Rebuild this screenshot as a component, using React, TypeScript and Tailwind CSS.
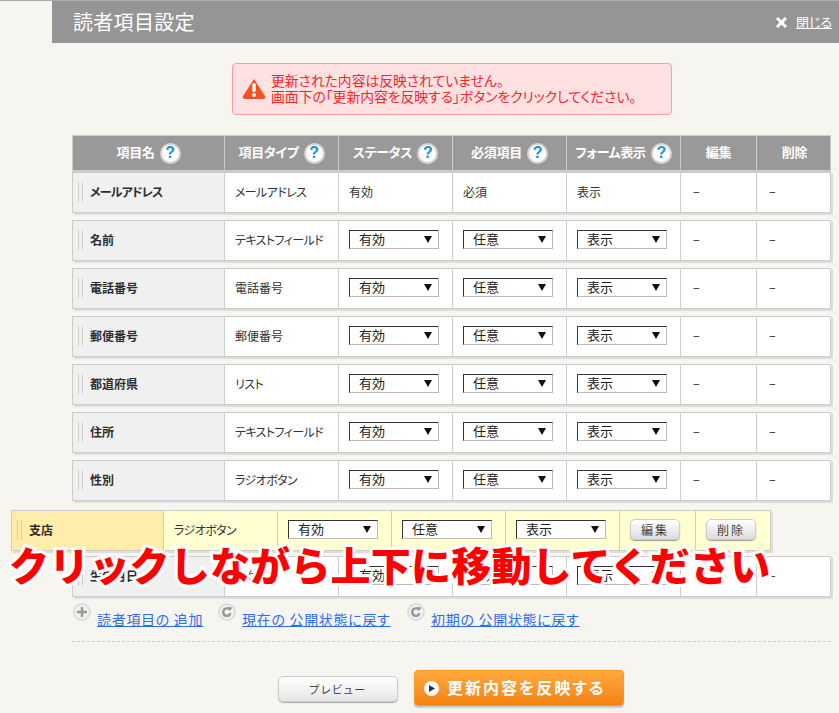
const jp = "font-['Noto_Sans_CJK_JP','Noto_Sans',sans-serif] [font-feature-settings:'palt']";

const cols = "grid grid-cols-[152px_114px_114px_114px_114px_76px_75px]";

const rows = [
  { name: "名前", type: "テキストフィールド", req: "任意" },
  { name: "電話番号", type: "電話番号", req: "任意" },
  { name: "郵便番号", type: "郵便番号", req: "任意" },
  { name: "都道府県", type: "リスト", req: "任意" },
  { name: "住所", type: "テキストフィールド", req: "任意" },
  { name: "性別", type: "ラジオボタン", req: "任意" },
];

// katakana sets tighter than kanji in the reference
const isKana = (s: string) => /^[ァ-ヶー]+$/.test(s);

const HelpIcon = () => (
  <span className="ml-[5px] flex h-[21px] w-[21px] items-center justify-center rounded-full border-2 border-[#d4d4d4] bg-white text-[16px] leading-none font-bold text-[#1b8fd6] font-['Liberation_Sans',sans-serif]">
    ?
  </span>
);

const HeadCell = ({ label, help }: { label: string; help?: boolean }) => (
  <div className="flex items-center justify-center border-r border-[#ccc] last:border-r-0 text-[13px] font-bold tracking-[-0.3px] text-white">
    <span className="-mt-[2px]">{label}</span>
    {help && <HelpIcon />}
  </div>
);

const FakeSelect = ({ value }: { value: string }) => (
  <div className="flex h-[19px] w-[90px] items-center justify-between border border-t-[#333] border-l-[#333] border-r-[#bbb] border-b-[#bbb] bg-white pl-[9px] pr-[6px] text-[13px] text-[#222]">
    <span className="-mt-[1px]">{value}</span>
    <svg width="8" height="7" viewBox="0 0 8 7"><path d="M0 0h8L4 7z" fill="#111" /></svg>
  </div>
);

const Grip = () => (
  <span className="mr-[7px] h-[20px] w-[5px] shrink-0 border-x border-[#ccc]" />
);

const Row = ({ name, type, status, req, show }: { name: string; type: string; status: React.ReactNode; req: React.ReactNode; show: React.ReactNode }) => (
  <div className={`${cols} mb-[7px] h-[41px] border border-[#ccc] bg-white text-[12px] text-[#333] shadow-[2px_2px_0_#dedede]`}>
    <div className="flex items-center border-r border-[#ccc] bg-[#f0f0f0] pb-[2px] pl-[5px] font-bold text-[#2d2d2d]">
      <Grip />
      <span className={isKana(name) ? "tracking-[-0.8px]" : ""}>{name}</span>
    </div>
    <div className="flex items-center border-r border-[#ccc] pb-[2px] pl-[10px]">
      <span className={isKana(type) ? "tracking-[-0.6px]" : ""}>{type}</span>
    </div>
    <div className="flex items-center border-r border-[#ccc] pb-[2px] pl-[10px]">{status}</div>
    <div className="flex items-center border-r border-[#ccc] pb-[2px] pl-[10px]">{req}</div>
    <div className="flex items-center border-r border-[#ccc] pb-[2px] pl-[10px]">{show}</div>
    <div className="flex items-center border-r border-[#ccc] pb-[2px] pl-[12px]">−</div>
    <div className="flex items-center pb-[2px] pl-[12px]">−</div>
  </div>
);

const GrayButton = ({ label }: { label: string }) => (
  <div className="flex h-[21px] w-[50px] items-center justify-center rounded-[5px] border border-[#ccc] bg-gradient-to-b from-white to-[#dcdcdc] text-[12px] tracking-[2px] text-[#444] shadow-[0_1px_1px_#999]">
    {label}
  </div>
);

const LinkIcon = ({ plus }: { plus?: boolean }) => (
  <span className="flex h-[18px] w-[18px] shrink-0 items-center justify-center rounded-full border-2 border-[#ddd] bg-[#f2f2f2]">
    <svg width="10" height="10" viewBox="0 0 10 10" fill="none" stroke="#999" strokeWidth="2.4">
      {plus ? <path d="M5 0v10M0 5h10" /> : <path d="M8.5 6.2A3.7 3.7 0 1 1 5 1.4h3M6.5 0l2 1.4-2 1.6" />}
    </svg>
  </span>
);

const BottomLink = ({ label, plus, className }: { label: string; plus?: boolean; className: string }) => (
  <div className={`flex items-start ${className}`}>
    <LinkIcon plus={plus} />
    <a className="mt-[6px] ml-[6px] text-[14px] leading-[20px] tracking-[0.7px] text-[#2f6bf0] underline">{label}</a>
  </div>
);

export default function App() {
  return (
    <div className={`relative h-[713px] w-[839px] overflow-hidden border-t border-[#aaa] bg-[#f6f5f0] ${jp}`}>
      <div className="ml-[52px] flex h-[42px] items-center justify-between bg-[#959595] pl-[21px] pr-[7px] text-white">
        <span className="text-[20px] tracking-[0.3px]">読者項目設定</span>
        <div className="flex items-center gap-[9px]">
          <svg width="11" height="11" viewBox="0 0 11 11" stroke="#fff" strokeWidth="3"><path d="M1 1l9 9M10 1l-9 9" /></svg>
          <span className="text-[13px] underline">閉じる</span>
        </div>
      </div>

      <div className="ml-[232px] mt-[20px] flex h-[52px] w-[440px] items-center rounded-[4px] border border-[#ff9a9a] bg-[#ffe1e1] pl-[9px] text-[13.8px] leading-[16px] text-[#f5252d]">
        <svg width="24" height="22" viewBox="0 0 24 22" className="mr-[5px] shrink-0">
          <path d="M12 1L23 18q1 3-2 3H3q-3 0-2-3z" fill="#f4511e" />
          <rect x="10.3" y="5" width="3.4" height="9" rx="1.5" fill="#fff" />
          <circle cx="12" cy="17" r="2" fill="#fff" />
        </svg>
        <div className="-mt-[3px]">
          <div>更新された内容は反映されていません。</div>
          <div>画面下の「更新内容を反映する」ボタンをクリックしてください。</div>
        </div>
      </div>

      <div className="ml-[72px] mt-[20px] w-[759px]">
        <div className={`${cols} h-[37px] border border-b-2 border-[#ccc] bg-[#999]`}>
          <HeadCell label="項目名" help />
          <HeadCell label="項目タイプ" help />
          <HeadCell label="ステータス" help />
          <HeadCell label="必須項目" help />
          <HeadCell label="フォーム表示" help />
          <HeadCell label="編集" />
          <HeadCell label="削除" />
        </div>
        <Row name="メールアドレス" type="メールアドレス" status="有効" req="必須" show="表示" />
        {rows.map((r) => (
          <Row
            key={r.name}
            name={r.name}
            type={r.type}
            status={<FakeSelect value="有効" />}
            req={<FakeSelect value={r.req} />}
            show={<FakeSelect value="表示" />}
          />
        ))}
        <div className="h-[48px]" />
        <Row name="生年月日" type="日付" status={<FakeSelect value="有効" />} req={<FakeSelect value="任意" />} show={<FakeSelect value="表示" />} />

        <div className="-mt-[1px] flex">
          <BottomLink label="読者項目の 追加" plus className="ml-[1px] w-[145px]" />
          <BottomLink label="現在の 公開状態に戻す" className="w-[189px]" />
          <BottomLink label="初期の 公開状態に戻す" className="" />
        </div>
        <div className="mt-[12px] border-t border-dashed border-[#ccc]" />

        <div className="mt-[28px] flex items-center">
          <div className="ml-[206px] flex h-[26px] w-[120px] items-center justify-center rounded-[5px] border border-[#ccc] bg-gradient-to-b from-white to-[#e6e6e6] text-[11px] tracking-[1.5px] text-[#444] shadow-[0_1px_1px_#aaa]">
            プレビュー
          </div>
          <div className="ml-[16px] mb-[2px] flex h-[36px] w-[210px] items-center rounded-[4px] border border-[#f39c1a] bg-gradient-to-b from-[#ffa93c] to-[#f58310] pl-[9px] text-[16px] font-bold tracking-[2px] text-[#fff] shadow-[0_2px_1px_#ccc]">
            <span className="mr-[8px] flex h-[15px] w-[15px] items-center justify-center rounded-full bg-white">
              <svg width="6" height="7" viewBox="0 0 6 7"><path d="M0 0l6 3.5L0 7z" fill="#333" /></svg>
            </span>
            <span className="-mt-[2px]">更新内容を反映する</span>
          </div>
        </div>
      </div>

      {/* row being dragged */}
      <div className="absolute left-[11px] top-[509px] grid h-[41px] w-[760px] grid-cols-[152px_114px_114px_114px_114px_76px_75px] border border-[#ccc] bg-[#ffffd2] text-[12px] text-[#333] shadow-[2px_2px_0_#dedede]">
        <div className="flex items-center border-r border-[#ccc] bg-[#ffedab] pb-[2px] pl-[5px] font-bold text-[#2d2d2d]"><Grip />支店</div>
        <div className="flex items-center border-r border-[#ccc] pb-[2px] pl-[10px] tracking-[-0.6px]">ラジオボタン</div>
        <div className="flex items-center border-r border-[#ccc] pb-[2px] pl-[10px]"><FakeSelect value="有効" /></div>
        <div className="flex items-center border-r border-[#ccc] pb-[2px] pl-[10px]"><FakeSelect value="任意" /></div>
        <div className="flex items-center border-r border-[#ccc] pb-[2px] pl-[10px]"><FakeSelect value="表示" /></div>
        <div className="flex items-center border-r border-[#ccc] pb-[2px] pl-[10px]"><GrayButton label="編集" /></div>
        <div className="flex items-center pb-[2px] pl-[10px]"><GrayButton label="削除" /></div>
      </div>

      {/* caption over the table */}
      <div className="absolute left-[9px] top-[538px] whitespace-nowrap text-[40px] leading-[50px] font-black tracking-[0.2px] text-[#f00] [-webkit-text-stroke:6px_white] [paint-order:stroke_fill] [font-feature-settings:normal]">
        クリックしながら上下に移動してください
      </div>
    </div>
  );
}
